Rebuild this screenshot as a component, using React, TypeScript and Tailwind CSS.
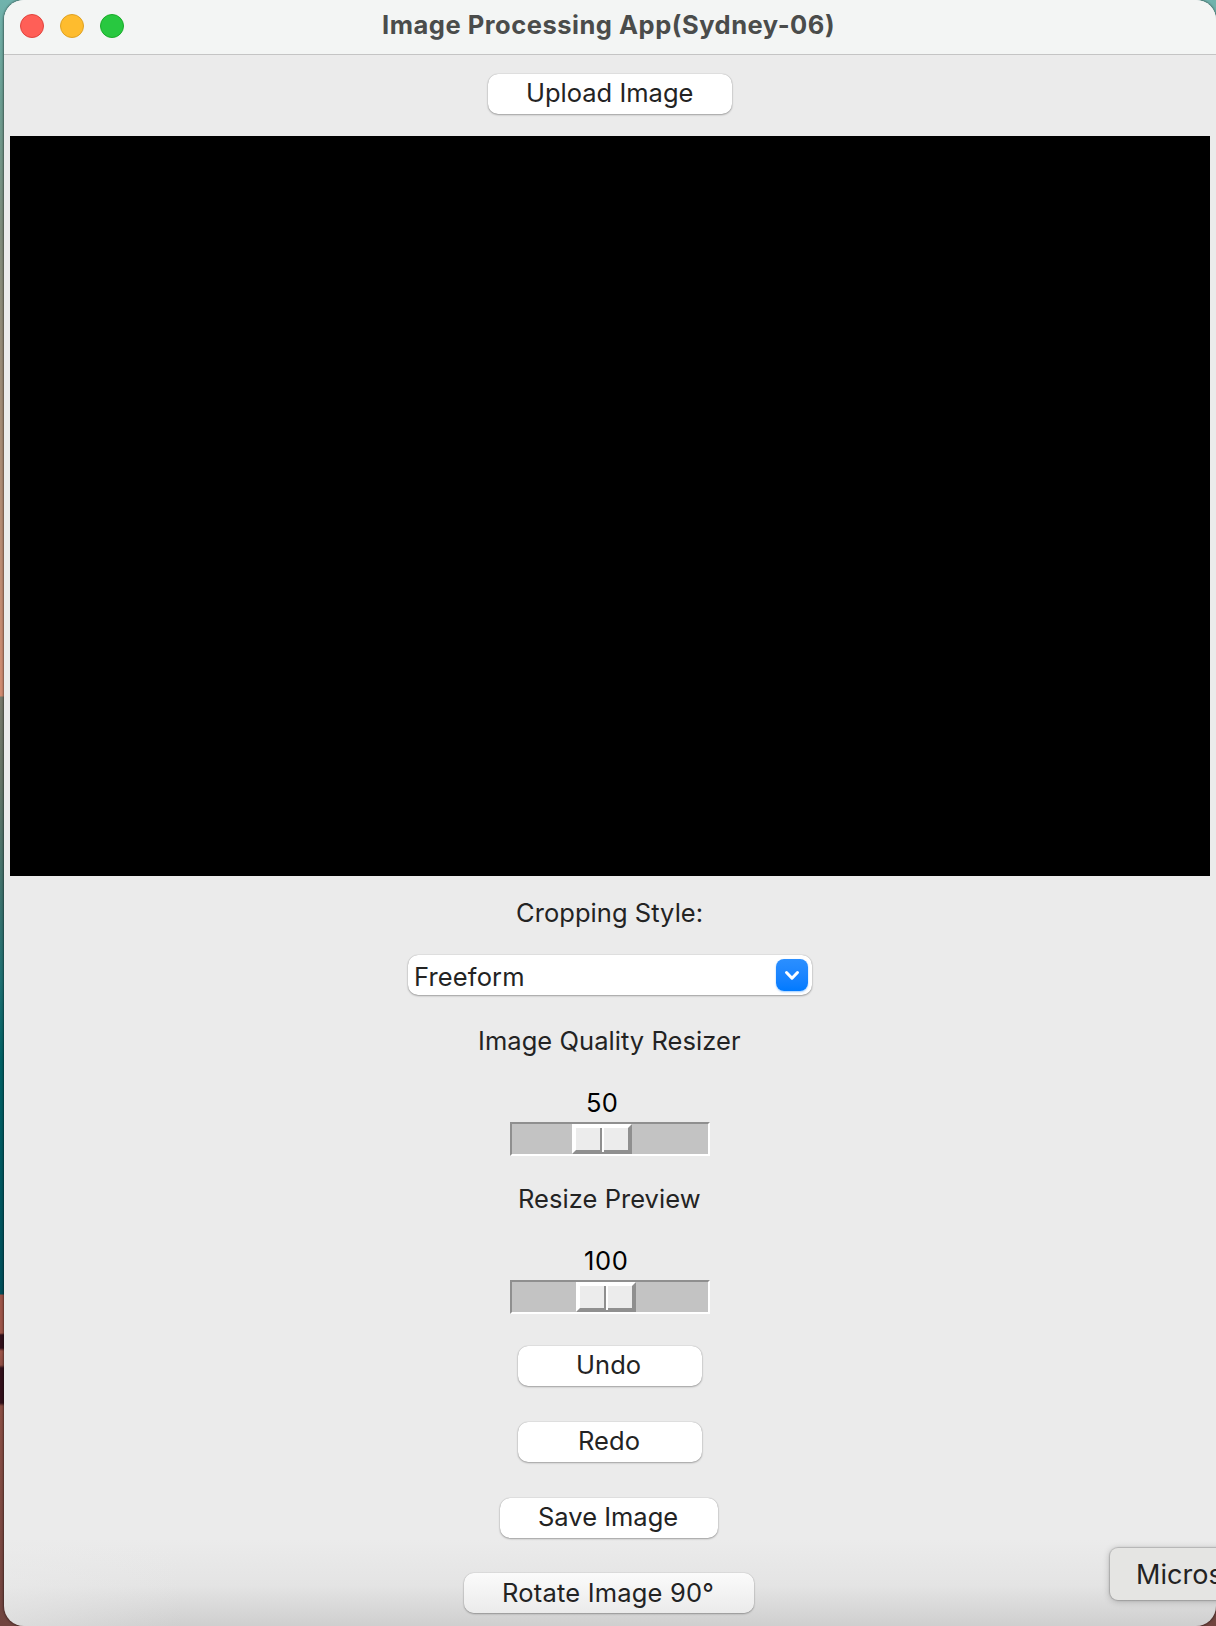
import { ReactNode } from "react";

function PushButton({ className, children }: { className: string; children: ReactNode }) {
  return (
    <button
      className={`block h-10 shrink-0 rounded-[10px] text-left whitespace-pre text-[#232323] shadow-[0_0_1px_rgba(0,0,0,0.35),0_1px_2px_rgba(0,0,0,0.3)] ${className}`}
    >
      {children}
    </button>
  );
}

function Scale({ thumb }: { thumb: string }) {
  return (
    <div className="ml-[506px] h-[34px] w-[200px] border-2 border-t-[#8f8f8f] border-r-white border-b-white border-l-[#8f8f8f] bg-[#c3c3c3]">
      <div
        className={`flex h-[30px] w-[60px] border-4 border-t-white border-r-[#8f8f8f] border-b-[#8f8f8f] border-l-white bg-[#ececec] ${thumb}`}
      >
        <div className="ml-6 h-[22px] w-0.5 bg-[#8f8f8f]" />
        <div className="h-6 w-0.5 bg-white" />
      </div>
    </div>
  );
}

function Light({ className }: { className: string }) {
  return <div className={`size-6 rounded-full border ${className}`} />;
}

export default function App() {
  return (
    <div className="relative h-[1626px] w-[1216px] overflow-hidden bg-[linear-gradient(180deg,#70b3ad_0px,#6b9d91_100px,#7e8b7b_230px,#a08a75_400px,#d18a70_695px,#d18a70_696px,#77786a_697px,#657466_780px,#1e7072_980px,#006064_1060px,#004e5a_1294px,#9c5448_1295px,#9c5448_1333px,#32101b_1335px,#32101b_1348px,#9c5448_1351px,#8f4e44_1365px,#32101b_1368px,#32101b_1403px,#8a4e44_1406px,#70443f_1626px)] pl-1 font-['Inter',sans-serif] text-[25.5px] tracking-[0.05px] text-[#232323]">
      <div className="flex h-[1626px] w-[1212px] flex-col overflow-hidden rounded-[20px] bg-[linear-gradient(90deg,rgba(235,235,235,0.5)_0px,rgba(235,235,235,0)_180px),linear-gradient(180deg,#ebebeb_1540px,#e4e4e4_1585px,#cfcfcf_1626px)] shadow-[0_0_2px_1px_rgba(0,0,0,0.4)]">
        <header className="flex h-[55px] shrink-0 border-b border-[#c4c4c4] bg-[#f3f5f4]">
          <div className="flex gap-4 pt-3.5 pl-4">
            <Light className="border-[#e0443e] bg-[#ff5f57]" />
            <Light className="border-[#dea123] bg-[#febc2e]" />
            <Light className="border-[#1aab29] bg-[#28c840]" />
          </div>
          <h1 className="ml-[258px] leading-[50px] font-bold tracking-[0.52px] whitespace-pre text-[#4a4c4b]">
            Image Processing App(Sydney-06)
          </h1>
        </header>

        <PushButton className="mt-[19px] ml-[484px] w-[244px] bg-white pb-0.5 pl-[38px] leading-9 tracking-normal">
          Upload Image
        </PushButton>

        <div className="mt-[22px] ml-1.5 h-[740px] w-[1200px] shrink-0 bg-black" />

        <div className="mt-[17px] mb-px ml-[512px] h-10 leading-10 whitespace-pre">Cropping Style:</div>

        <div className="mt-[21px] ml-[404px] flex h-10 w-[404px] items-center justify-between rounded-[10px] bg-white pr-1 pl-1.5 shadow-[0_0_1px_rgba(0,0,0,0.35),0_1px_2px_rgba(0,0,0,0.3)]">
          <span className="pt-1 leading-9 tracking-[0.15px]">Freeform</span>
          <div className="flex size-8 items-center justify-center rounded-lg bg-linear-to-b from-[#2b8fff] to-[#007aff] shadow-[0_1px_2px_rgba(0,122,255,0.4)]">
            <svg className="mt-0.5" width="16" height="12" viewBox="0 0 16 12" fill="none">
              <path d="M2.5 2.5 L8 8.2 L13.5 2.5" stroke="white" strokeWidth="3" strokeLinecap="round" strokeLinejoin="round" />
            </svg>
          </div>
        </div>

        <div className="mt-[26px] ml-[474px] h-10 leading-10 whitespace-pre">Image Quality Resizer</div>

        <div className="mt-[22px] ml-[582px] h-[39px] leading-10 tracking-[0.3px] text-black">50</div>
        <Scale thumb="ml-[60px]" />

        <div className="mt-[23px] ml-[514px] h-10 leading-10 whitespace-pre">Resize Preview</div>

        <div className="mt-[22px] ml-[580px] h-[39px] leading-10 tracking-[0.7px] text-black">100</div>
        <Scale thumb="ml-[64px]" />

        <PushButton className="mt-8 ml-[514px] w-[184px] bg-white pb-0.5 pl-[58px] leading-9">Undo</PushButton>
        <PushButton className="mt-9 ml-[514px] w-[184px] bg-white pb-0.5 pl-[60px] leading-9">Redo</PushButton>
        <PushButton className="mt-9 ml-[496px] w-[218px] bg-white pb-0.5 pl-[38px] leading-9 tracking-normal">
          Save Image
        </PushButton>
        <PushButton className="mt-[35px] ml-[460px] w-[290px] bg-linear-to-b from-[#fbfbfb] to-[#ebebeb] pl-[38px] leading-[38px] tracking-[0.2px]">
          Rotate Image 90°
        </PushButton>
      </div>

      <div className="absolute top-[1548px] left-[1110px] h-[52px] w-[140px] rounded-lg bg-[#e5e5e3] pl-[26px] text-[27px] leading-[54px] whitespace-pre shadow-[0_0_1px_1px_rgba(0,0,0,0.16),0_1px_7px_rgba(0,0,0,0.25)]">
        Micros
      </div>
    </div>
  );
}
